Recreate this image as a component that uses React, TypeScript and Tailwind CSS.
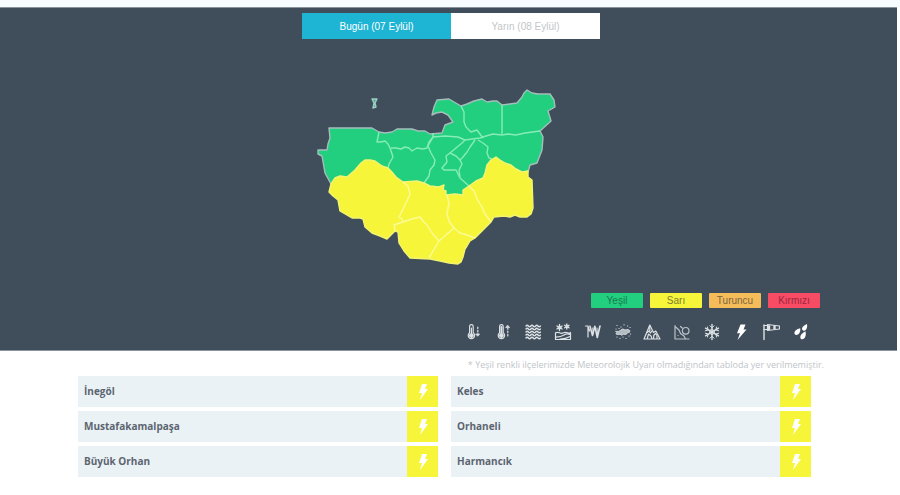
import React, { useState } from 'react';

type Level = 'green' | 'yellow' | 'orange' | 'red';

interface District {
  name: string;
  level: Level;
}

const days = ['Bugün (07 Eylül)', 'Yarın (08 Eylül)'];

const legend = [
  { label: 'Yeşil', className: 'bg-[#22cf7e] text-[#1b7a52]' },
  { label: 'Sarı', className: 'bg-[#f7f53a] text-[#7d7d35]' },
  { label: 'Turuncu', className: 'bg-[#f5bd5a] text-[#7d6540]' },
  { label: 'Kırmızı', className: 'bg-[#f74c64] text-[#9c2740]' },
];

const levelColors: Record<Level, string> = {
  green: 'bg-[#22cf7e]',
  yellow: 'bg-[#f7f53a]',
  orange: 'bg-[#f5bd5a]',
  red: 'bg-[#f74c64]',
};

const districts: District[] = [
  { name: 'İnegöl', level: 'yellow' },
  { name: 'Keles', level: 'yellow' },
  { name: 'Mustafakamalpaşa', level: 'yellow' },
  { name: 'Orhaneli', level: 'yellow' },
  { name: 'Büyük Orhan', level: 'yellow' },
  { name: 'Harmancık', level: 'yellow' },
];

const greenArea =
  'M329 128 L372 128 L379 132 L385 133 L392 132 L397 129 L402 129 L412 129 L418 131 L425 131 L430 134 L442 133 L445 125 L453 122 L448 115 L442 112 L436 113 L432 115 L434 107 L437 100 L449 99 L461 106 L467 104 L474 101 L482 99 L487 102 L493 101 L497 101 L502 105 L517 103 L522 97 L524 93 L527 90 L532 93 L538 94 L550 94 L554 100 L555 107 L548 111 L551 121 L540 131 L543 137 L542 150 L537 163 L530 165 L528 172 L500 190 L470 200 L400 200 L331 184 L325 173 L322 156 L318 154 L318 150 L327 150 L328 144 L330 138 Z';

const yellowArea =
  'M331 184 L335 178 L340 176 L347 177 L355 170 L361 163 L365 160 L370 160 L375 161 L382 166 L388 168 L391 171 L396 177 L403 182 L417 181 L424 183 L430 186 L439 187 L444 185 L443 190 L446 191 L446 195 L455 194 L463 195 L463 190 L469 186 L476 181 L483 178 L485 173 L487 165 L491 160 L496 157 L500 160 L505 163 L511 165 L516 169 L522 172 L528 171 L528 177 L532 180 L533 208 L531 214 L527 217 L520 217 L515 215 L510 217 L504 216 L494 217 L491 222 L475 238 L470 241 L467 246 L465 249 L463 257 L461 262 L458 264 L449 263 L440 261 L430 259 L410 258 L404 251 L399 243 L398 232 L395 231 L392 234 L387 239 L380 236 L372 233 L365 227 L363 219 L360 218 L352 218 L340 211 L338 200 L333 196 L329 192 Z';

const greenBorders = [
  'M379 132 L377 142 L381 142 L385 141 L388 144 L390 148 L393 157 L389 164 L388 168',
  'M391 148 L396 148 L401 149 L405 147 L409 148 L412 151 L417 148 L423 149 L427 148 L429 142 L434 136',
  'M433 133 L433 137 L428 146 L431 153 L435 160 L434 165 L430 170 L429 176 L424 183',
  'M461 106 L464 112 L464 122 L466 127 L471 132 L477 130 L480 134 L483 138',
  'M433 137 L445 136 L458 137 L465 140 L480 138 L486 136 L493 134 L502 135 L508 134 L516 135 L525 133 L540 131',
  'M502 105 L502 134',
  'M475 140 L470 147 L467 152 L463 157 L460 160 L456 156 L450 153 L456 148 L462 143 L465 140',
  'M450 153 L446 156 L447 162 L442 168 L444 170 L456 170 L458 174 L460 178 L469 186',
  'M460 160 L462 164 L459 170 L460 177',
  'M478 140 L483 143 L488 147 L487 153 L489 158 L492 159',
];

const yellowBorders = [
  'M403 182 L408 186 L410 194 L406 203 L402 211 L399 217 L402 219 L403 222 L394 225 L395 231',
  'M403 222 L412 219 L420 217 L423 221 L427 225 L432 233 L439 241 L429 258',
  'M439 241 L447 234 L454 228 L449 221 L447 214 L449 203 L447 195',
  'M454 228 L460 233 L467 235 L475 238',
  'M469 186 L474 191 L477 199 L482 207 L485 214 L491 222',
];

function DistrictMap() {
  return (
    <svg
      viewBox="301 80 300 190"
      className="mt-[41px] h-[190px] w-[300px]"
      strokeWidth="1.4"
      strokeLinejoin="round"
      role="img"
      aria-label="Bursa"
    >
      <path d="M372 99 L377 99 L375 103 L376 107 L373 108 L374 103 Z" fill="#52a68c" stroke="#9ccfc4" />
      <path d={greenArea} fill="#22cf7e" stroke="#a3bfbc" />
      <g fill="none" stroke="#86ecb8">
        {greenBorders.map((d) => (
          <path key={d} d={d} />
        ))}
      </g>
      <path d={yellowArea} fill="#f7f53a" stroke="#f2f472" />
      <g fill="none" stroke="#fbfb98">
        {yellowBorders.map((d) => (
          <path key={d} d={d} />
        ))}
      </g>
    </svg>
  );
}

function Icon({ label, children }: { label: string; children: React.ReactNode }) {
  return (
    <svg
      viewBox="0 0 18 18"
      className="size-[18px]"
      fill="none"
      stroke="#dde2e6"
      strokeWidth="1.2"
      strokeLinecap="round"
      strokeLinejoin="round"
      role="img"
      aria-label={label}
    >
      {children}
    </svg>
  );
}

function Bolt({ className }: { className: string }) {
  return (
    <svg viewBox="0 0 10 16" className={className} fill="currentColor" aria-hidden="true">
      <path d="M4 0 L9 0 L7 5 L10 5 L2 16 L4 9 L1 9 Z" />
    </svg>
  );
}

function HazardIcons() {
  return (
    <div className="mt-[15px] flex w-[345px] justify-between">
      <Icon label="Soğuk">
        <path d="M4.6 9.8 V3.4 a1.8 1.8 0 0 1 3.6 0 V9.8 a3.2 3.2 0 1 1 -3.6 0 Z" />
        <circle cx="6.4" cy="12.6" r="1.8" fill="#dde2e6" />
        <path d="M6.4 5 V12" />
        <path d="M12.8 4 V12" strokeDasharray="1.6 1.8" />
        <path d="M11 11 H14.6 L12.8 13 Z" fill="#dde2e6" strokeWidth="0.8" />
      </Icon>
      <Icon label="Sıcak">
        <path d="M4.6 9.8 V3.4 a1.8 1.8 0 0 1 3.6 0 V9.8 a3.2 3.2 0 1 1 -3.6 0 Z" />
        <circle cx="6.4" cy="12.6" r="1.8" fill="#dde2e6" />
        <path d="M6.4 4 V12" strokeWidth="2" />
        <path d="M12.8 13 V5" strokeDasharray="1.6 1.8" />
        <path d="M11 4.6 H14.6 L12.8 2.4 Z" fill="#dde2e6" strokeWidth="0.8" />
      </Icon>
      <Icon label="Sel">
        {[3, 6, 9, 12, 15].map((y) => (
          <path key={y} d={`M2 ${y} q1.2 -1.6 2.4 0 t2.4 0 t2.4 0 t2.4 0 t2.4 0 t2.4 0`} strokeWidth="1.4" />
        ))}
      </Icon>
      <Icon label="Kar erimesi">
        <path d="M5.5 1.5 V7.5 M2.9 3 L8.1 6 M8.1 3 L2.9 6 M12.8 1 V6 M10.6 2.2 L15 4.8 M15 2.2 L10.6 4.8" strokeWidth="1.3" />
        <circle cx="5.5" cy="4.5" r="1.6" strokeWidth="0.8" />
        <circle cx="12.8" cy="3.5" r="1.3" strokeWidth="0.8" />
        <path d="M1.5 9.8 q2 -1 4 0 t4 0 t4 0 t3 -0.3 V16.5 H1.5 Z M2 14.2 Q7 14 10 12 T16 11.5 M6 16 Q12 16 16 13.5" />
      </Icon>
      <Icon label="Buzlanma">
        <path d="M1.5 3 H4 V14 M4 3 L5.5 8" />
        <path d="M6 3.2 L8.5 12.5 L10.8 3.2 L13.3 14.5 L16 3" strokeWidth="1.6" />
        <path d="M8.8 5 L9 11 M13 5 L13.5 12" strokeWidth="1" />
      </Icon>
      <Icon label="Toz taşınımı">
        <path d="M2 8.5 Q5 9 6.5 7.2 Q9 4.8 11 7 Q14.5 5.6 15.8 7.6 Q16.5 9.6 13.5 10 Q12.5 12.2 9.5 11.3 Q7.5 13 6 11.2 Q4 12 1.8 11 Q4 10 2 8.5 Z" fill="#b4bcc3" strokeWidth="0.8" />
        <path d="M3 2.5 h.1 M7 4 h.1 M10 1.8 h.1 M13.5 3 h.1 M16 4.5 h.1 M2 6 h.1 M5 5.5 h.1 M3 14 h.1 M6 15.5 h.1 M9 14 h.1 M12 15.5 h.1 M15 13 h.1 M16.5 11 h.1" strokeWidth="1.2" />
      </Icon>
      <Icon label="Çığ">
        <path d="M1 16 L6.8 2 L10.5 9.5 L12.8 8 L17 16 Z" />
        <path d="M4 9.5 L6 8 L7.5 10 L9 8 M4.3 15.5 L5.5 11 L8 13 L9 15.5 M10.7 15.5 V12.5 L12.5 10.5 L14 12.5 V15.5 M6.8 3 V8" />
      </Icon>
      <Icon label="Heyelan">
        <path d="M2 2.5 V16 H16 M2 3.5 L6 7 L7.5 10.5 L11 13 L12.5 16" stroke="#bcc4cb" />
        <circle cx="12.7" cy="7.8" r="3.3" stroke="#bcc4cb" />
        <path d="M7.5 3.5 L9.3 5 M5 12.5 h.1" stroke="#bcc4cb" />
      </Icon>
      <Icon label="Kar">
        <path d="M9 1.5 V16.5 M2.5 5.2 L15.5 12.8 M15.5 5.2 L2.5 12.8" strokeWidth="1.4" />
        <path d="M7 2.8 L9 4.8 L11 2.8 M7 15.2 L9 13.2 L11 15.2 M2.3 7.8 L5.2 7 L4.4 4 M15.7 10.2 L12.8 11 L13.6 14 M15.7 7.8 L12.8 7 L13.6 4 M2.3 10.2 L5.2 11 L4.4 14 M9 6.4 L11.3 7.7 V10.3 L9 11.6 L6.7 10.3 V7.7 Z" strokeWidth="1" />
      </Icon>
      <Icon label="Gök gürültülü sağanak">
        <path d="M8.5 1.5 L13.5 1.5 L11.5 6.5 L14.5 6.5 L5.5 17 L8 10.2 L5 10.2 Z" fill="#fff" stroke="none" />
      </Icon>
      <Icon label="Rüzgar">
        <path d="M2 2 V16.5" strokeWidth="1.4" />
        <path d="M2 2.5 H5.5 M2 6.5 H5.5 M5.5 1.5 L17.5 3 V6 L5.5 7.5 Z" />
        <path d="M7 2.2 V7 M12.5 2.8 V6.3" strokeWidth="2.4" strokeLinecap="butt" />
      </Icon>
      <Icon label="Yağmur">
        <g fill="#fff" stroke="none">
          <path d="M15 1 C10.6 3 9.4 5 10.3 6.8 C12 9.2 16 7 15 1 Z" />
          <path d="M8.2 5.3 C3.6 6.5 1.8 8.8 2.6 11 C4.2 13.4 9 11.4 8.2 5.3 Z" />
          <path d="M13.5 8.3 C8.8 10.8 7.7 13.4 8.6 15.4 C10.4 17.8 15 15 13.5 8.3 Z" />
        </g>
      </Icon>
    </div>
  );
}

export default function App() {
  const [activeDay, setActiveDay] = useState(0);

  return (
    <div className="min-h-screen bg-white">
      <div className="h-[7px] bg-[#f6fcff]" />

      {/* Map panel */}
      <section className="mr-[3px] flex flex-col items-center border-y border-[#8a939b] bg-[#404d5a] pt-[5px] pb-[9px] pl-[5px] font-['Liberation_Sans',sans-serif]">
        <div className="flex w-[298px]">
          {days.map((day, i) => (
            <button
              key={day}
              type="button"
              onClick={() => setActiveDay(i)}
              className={`h-[26px] flex-1 text-[10px] ${
                i === activeDay ? 'bg-[#1eb4d4] text-white' : 'bg-white text-[#c3c6c9]'
              }`}
            >
              {day}
            </button>
          ))}
        </div>

        <DistrictMap />

        <div className="mt-[23px] flex flex-col items-end self-end pr-[77px]">
          <ul className="flex gap-[7px]">
            {legend.map((item) => (
              <li
                key={item.label}
                className={`h-[15px] w-[52px] rounded-[1px] text-center text-[10px] leading-[15px] ${item.className}`}
              >
                {item.label}
              </li>
            ))}
          </ul>
          <div className="pr-[10px]">
            <HazardIcons />
          </div>
        </div>
      </section>

      {/* District list */}
      <section className="pr-[89px] pl-[78px] font-['Open_Sans',sans-serif]">
        <p className="-mr-[13px] pt-[6px] pb-[3px] text-right text-[9px] leading-4 text-[#c0c5c9]">
          * Yeşil renkli ilçelerimizde Meteorolojik Uyarı olmadığından tabloda yer verilmemiştir.
        </p>
        <ul className="grid grid-cols-2 gap-x-[13px] gap-y-1">
          {districts.map((district) => (
            <li key={district.name} className="flex h-[31px] items-center bg-[#ebf2f6]">
              <span className="flex-1 pl-[6px] text-[10px] font-bold text-[#5b6570]">{district.name}</span>
              <span className={`flex size-[31px] items-center justify-center text-white ${levelColors[district.level]}`}>
                <Bolt className="h-4 w-[10px]" />
              </span>
            </li>
          ))}
        </ul>
      </section>
    </div>
  );
}
